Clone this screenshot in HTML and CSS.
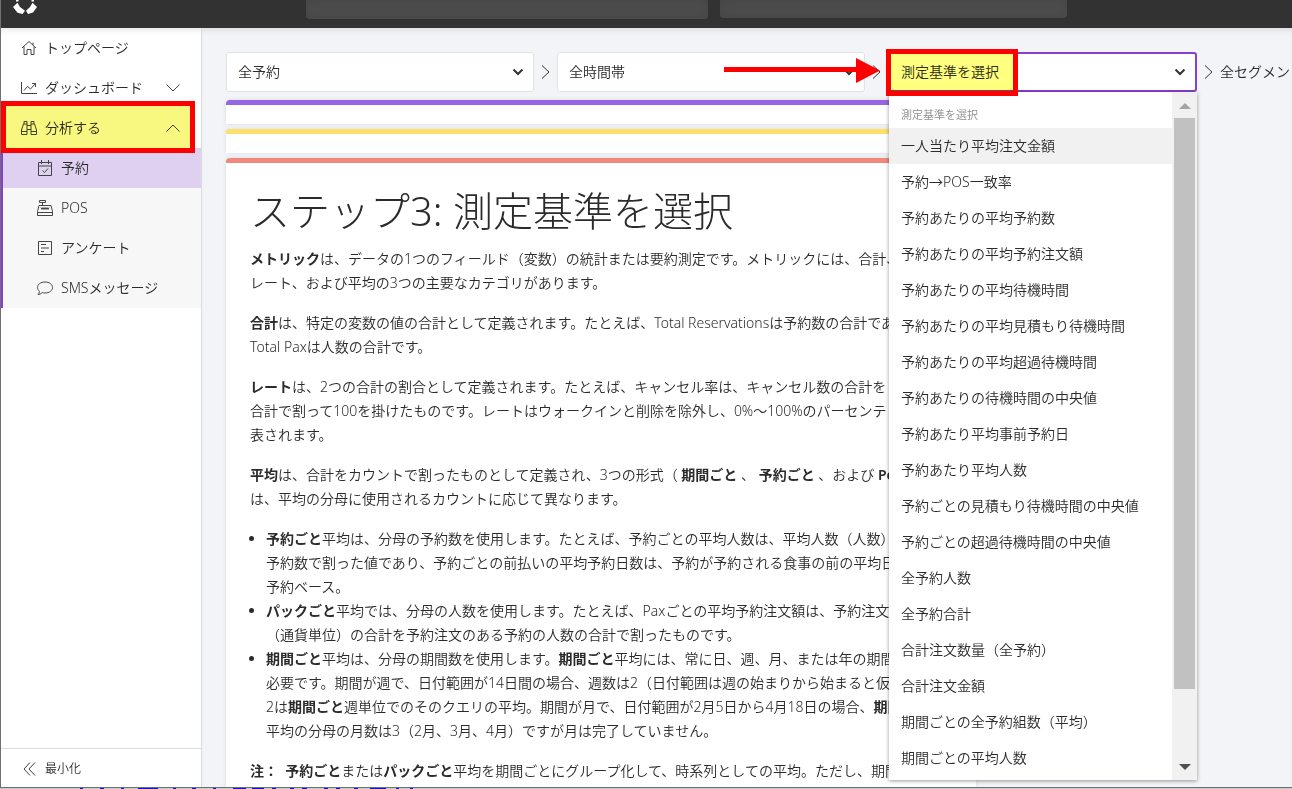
FILE: index.html
```html
<!DOCTYPE html>
<html lang="ja">
<head>
    <meta charset="UTF-8">
    <meta name="viewport" content="width=device-width, initial-scale=1.0">
    <title>測定基準を選択</title>
    <link rel="stylesheet" href="styles.css">
</head>
<body>
<div class="app">
    <header class="topbar">
        <svg class="logo" viewBox="0 0 26 28" width="26" height="28" fill="#fff">
            <path d="M1 7L5.500 2.800L8 7L13 10.800L10.500 14L5.500 12.800ZM25 7L20.500 2.800L18 7L14 10.800L16 14L21 12.500ZM4 0H6.500V1.500H4ZM19.500 0H22V1.500H19.500Z"/>
        </svg>
        <div class="topbar-box topbar-box-wide"></div>
        <div class="topbar-box"></div>
    </header>

    <div class="body">
        <nav class="sidebar">
            <a class="nav-item" href="#">
                <svg class="icon" viewBox="0 0 16 16"><path d="M1 8L8 1.500L15 8M3 6.500V14.500H6V9.500H10V14.500H13V6.500M12 5V2.500"/></svg>
                <span>トップページ</span>
            </a>
            <a class="nav-item" href="#">
                <svg class="icon" viewBox="0 0 16 16"><path d="M.5 2V13.500H16M3 10.500L6.500 6.500L9.500 9L14.500 3.500M11 3.500H14.500V7"/></svg>
                <span>ダッシュボード</span>
                <svg class="caret" viewBox="0 0 14 8"><path d="M.5 .5L7 7L13.500 .5"/></svg>
            </a>
            <a class="nav-item nav-open" href="#">
                <svg class="icon" viewBox="0 0 16 16"><path d="M2.500 4L.5 10V14.500H6V4ZM13.500 4L15.500 10V14.500H10V4ZM3 4V1.500H6V4M13 4V1.500H10V4M6 5.500H10M6 9.500H10M.5 11.500H6M10 11.500H15.500"/></svg>
                <span>分析する</span>
                <svg class="caret" viewBox="0 0 14 8"><path d="M.5 7.500L7 1L13.500 7.500"/></svg>
                <i class="mark mark-nav"></i>
            </a>
            <div class="subnav">
                <a class="nav-item selected" href="#">
                    <svg class="icon" viewBox="0 0 16 16"><path d="M1.500 2.500H14.500V15.500H1.500ZM1.500 6H14.500M4.500 0V4M11.500 0V4M5.500 10.500L7.500 12.500L11 8.500"/></svg>
                    <span>予約</span>
                </a>
                <a class="nav-item" href="#">
                    <svg class="icon" viewBox="0 0 16 16"><path d="M2.500 .5H8.500V2.500H2.500ZM5.500 2.500V5.500M2 5.500H14L15.500 11.500V15.500H.5V11.500ZM.5 12.500H15.500M4 7.500L5 9.500L6 7.500L7 9.500L8 7.500L9 9.500L10 7.500L11 9.500L12 7.500"/></svg>
                    <span>POS</span>
                </a>
                <a class="nav-item" href="#">
                    <svg class="icon" viewBox="0 0 16 16"><path d="M1.500 1.500H14.500V14.500H1.500ZM4 4.500H9M4 8H12M4 11.500H7"/></svg>
                    <span>アンケート</span>
                </a>
                <a class="nav-item" href="#">
                    <svg class="icon" viewBox="0 0 16 16"><path d="M8 2C12.500 2 15.500 4.500 15.500 7.500S12.500 13 8 13C7 13 6 12.800 5.200 12.500C4 13.800 2.500 14.500 1 14.500C2 13.500 2.400 12.500 2.500 11.300C1.200 10.300 .5 9 .5 7.500C.5 4.500 3.500 2 8 2Z"/></svg>
                    <span>SMSメッセージ</span>
                </a>
            </div>
            <button type="button" class="minimize">
                <svg class="icon" viewBox="0 0 16 16"><path d="M9 1.500L3 8L9 14.500M14 1.500L8 8L14 14.500"/></svg>
                <span>最小化</span>
            </button>
        </nav>

        <main class="content">
            <div class="filters">
                <button type="button" class="picker">
                    <span>全予約</span>
                    <svg class="chevron" viewBox="0 0 12 8"><path d="M1.500 1.500L6 6L10.500 1.500"/></svg>
                </button>
                <svg class="sep" viewBox="0 0 9 14"><path d="M1 .5L8 7L1 13.500"/></svg>
                <button type="button" class="picker">
                    <span>全時間帯</span>
                    <svg class="chevron" viewBox="0 0 12 8"><path d="M1.500 1.500L6 6L10.500 1.500"/></svg>
                </button>
                <svg class="sep" viewBox="0 0 9 14"><path d="M1 .5L8 7L1 13.500"/></svg>
                <div class="metric">
                    <button type="button" class="picker picker-active">
                        <span>測定基準を選択</span>
                        <svg class="chevron" viewBox="0 0 12 8"><path d="M1.500 1.500L6 6L10.500 1.500"/></svg>
                    </button>
                    <div class="menu">
                        <ul class="options">
                            <li class="options-title">測定基準を選択</li>
                            <li class="hover">一人当たり平均注文金額</li>
                            <li>予約→POS一致率</li>
                            <li>予約あたりの平均予約数</li>
                            <li>予約あたりの平均予約注文額</li>
                            <li>予約あたりの平均待機時間</li>
                            <li>予約あたりの平均見積もり待機時間</li>
                            <li>予約あたりの平均超過待機時間</li>
                            <li>予約あたりの待機時間の中央値</li>
                            <li>予約あたり平均事前予約日</li>
                            <li>予約あたり平均人数</li>
                            <li>予約ごとの見積もり待機時間の中央値</li>
                            <li>予約ごとの超過待機時間の中央値</li>
                            <li>全予約人数</li>
                            <li>全予約合計</li>
                            <li>合計注文数量（全予約）</li>
                            <li>合計注文金額</li>
                            <li>期間ごとの全予約組数（平均）</li>
                            <li>期間ごとの平均人数</li>
                        </ul>
                        <div class="scrollbar">
                            <svg viewBox="0 0 12 6"><path d="M0 6L6 0L12 6Z" fill="#a3a3a3"/></svg>
                            <div class="thumb"></div>
                            <svg viewBox="0 0 12 6"><path d="M0 0L6 6L12 0Z" fill="#505050"/></svg>
                        </div>
                    </div>
                    <i class="mark mark-metric"></i>
                    <svg class="arrow" viewBox="0 0 156 26"><path d="M0 9H132V0L156 12.500L132 25V14H0Z" fill="#f00"/></svg>
                </div>
                <svg class="sep" viewBox="0 0 9 14"><path d="M1 .5L8 7L1 13.500"/></svg>
                <span>全セグメン</span>
            </div>

            <section class="step step-purple"></section>
            <section class="step step-yellow"></section>
            <section class="step step-red">
                <h1>ステップ3: 測定基準を選択</h1>
                <p><b>メトリック</b>は、データの1つのフィールド（変数）の統計または要約測定です。メトリックには、合計、<br>レート、および平均の3つの主要なカテゴリがあります。</p>
                <p><b>合計</b>は、特定の変数の値の合計として定義されます。たとえば、Total Reservationsは予約数の合計であり、<br>Total Paxは人数の合計です。</p>
                <p><b>レート</b>は、2つの合計の割合として定義されます。たとえば、キャンセル率は、キャンセル数の合計を<br>合計で割って100を掛けたものです。レートはウォークインと削除を除外し、0%〜100%のパーセンテ<br>表されます。</p>
                <p><b>平均</b>は、合計をカウントで割ったものとして定義され、3つの形式（ <b>期間ごと</b> 、 <b>予約ごと</b> 、および <b>Per</b><br>は、平均の分母に使用されるカウントに応じて異なります。</p>
                <ul>
                    <li><b>予約ごと</b>平均は、分母の予約数を使用します。たとえば、予約ごとの平均人数は、平均人数（人数）<br>予約数で割った値であり、予約ごとの前払いの平均予約日数は、予約が予約される食事の前の平均日<br>予約ベース。</li>
                    <li><b>パックごと</b>平均では、分母の人数を使用します。たとえば、Paxごとの平均予約注文額は、予約注文<br>（通貨単位）の合計を予約注文のある予約の人数の合計で割ったものです。</li>
                    <li><b>期間ごと</b>平均は、分母の期間数を使用します。<b>期間ごと</b>平均には、常に日、週、月、または年の期間<br>必要です。期間が週で、日付範囲が14日間の場合、週数は2（日付範囲は週の始まりから始まると仮<br>2は<b>期間ごと</b>週単位でのそのクエリの平均。期間が月で、日付範囲が2月5日から4月18日の場合、<b>期間</b><br>平均の分母の月数は3（2月、3月、4月）ですが月は完了していません。</li>
                </ul>
                <p><b>注：&nbsp; 予約ごと</b>または<b>パックごと</b>平均を期間ごとにグループ化して、時系列としての平均。ただし、期間</p>
            </section>
        </main>
    </div>
</div>
<svg class="underlay" viewBox="0 0 420 1"><path d="M80 .5H83M100 .5H104M121 .5H124M138 .5H158M173 .5H176M192 .5H196M213 .5H216M233 .5H246M252 .5H264M272 .5H276M290 .5H294M302 .5H307M324 .5H328M336 .5H340M354 .5H358M370 .5H386M396 .5H399M410 .5H413"/></svg>
</body>
</html>
```
FILE: styles.css
```css
* {
    box-sizing: border-box;
}
body {
    display: flex;
    flex-direction: column;
    margin: 0;
    height: 100vh;
    overflow: hidden;
    background: #c8cacd;
    color: #2b2b2b;
    font-family: "Noto Sans", "Noto Sans CJK JP", sans-serif;
    font-size: 14px;
    font-weight: 350;
    line-height: 24px;
}
button {
    font: inherit;
    color: inherit;
    cursor: pointer;
}
ul {
    margin: 0;
    padding: 0;
}
svg {
    flex: none;
    fill: none;
    stroke-width: 1;
}
.app {
    display: flex;
    flex: 1;
    flex-direction: column;
    min-height: 0;
    border-left: 1px solid #707070;
    border-bottom: 1px solid #707070;
}
.underlay {
    width: 420px;
    height: 1px;
    stroke: #1a10c8;
}

/* top bar */
.topbar {
    display: flex;
    flex: none;
    gap: 12px;
    height: 28px;
    padding-left: 11px;
    background: #323232;
    align-items: flex-start;
}
.logo {
    margin-right: 256px;
    fill: #fff;
}
.topbar-box {
    width: 347px;
    height: 18px;
    border-radius: 0 0 4px 4px;
    background: #4c4c4c;
    box-shadow: inset 0 0 8px #454545;
}
.topbar-box-wide {
    width: 402px;
    height: 19px;
}
.body {
    display: flex;
    flex: 1;
    min-height: 0;
}

/* sidebar */
.sidebar {
    display: flex;
    flex-direction: column;
    flex: none;
    width: 201px;
    background: #fff;
    border-right: 1px solid #dcdde0;
    box-shadow: inset 0 6px 6px -4px #e6e6e6;
}
.nav-item {
    display: flex;
    align-items: center;
    gap: 8px;
    height: 40px;
    padding: 0 21px 0 20px;
    color: #2b2b2b;
    text-decoration: none;
}
.nav-open {
    position: relative;
}
.icon {
    width: 16px;
    height: 16px;
    stroke: #444;
}
.caret {
    width: 14px;
    height: 8px;
    margin-left: auto;
    stroke: #444;
}
.subnav {
    border-left: 2px solid #8540cf;
    background: #f7f7f7;
}
.subnav .nav-item {
    padding-left: 34px;
}
.subnav .selected {
    background: #dfd0f1;
}
.minimize {
    display: flex;
    align-items: center;
    gap: 8px;
    height: 39px;
    margin-top: auto;
    padding: 1px 20px 0;
    border: 0;
    border-top: 1px solid #dcdde0;
    background: #fff;
    font-size: 12px;
}

/* filters */
.content {
    flex: 1;
    min-width: 0;
    padding: 24px 0 0 24px;
    overflow: hidden;
    background: #f3f4f7;
    box-shadow: inset 0 6px 6px -4px #d8d9dc;
}
.filters {
    display: flex;
    align-items: center;
    gap: 7px;
    margin-bottom: 8px;
    white-space: nowrap;
}
.picker {
    display: flex;
    flex: none;
    align-items: center;
    justify-content: space-between;
    width: 308px;
    height: 40px;
    padding: 0 9px 0 11px;
    border: 1px solid #e1e2e5;
    border-radius: 3px;
    background: #fff;
}
.chevron {
    width: 12px;
    height: 8px;
    stroke: #333;
    stroke-width: 2;
}
.sep {
    width: 9px;
    height: 14px;
    stroke: #333;
}
.metric {
    position: relative;
}
.picker-active {
    width: 309px;
    border: 2px solid #8540cf;
    padding-left: 11px;
}
.menu {
    position: absolute;
    top: 40px;
    left: 1px;
    display: flex;
    width: 308px;
    background: #fff;
    box-shadow: 0 1px 4px rgba(0, 0, 0, 0.4);
}
.options {
    flex: 1;
    padding: 10px 0 4px;
    list-style: none;
}
.options li {
    height: 36px;
    padding: 0 12px;
    line-height: 36px;
}
.options .options-title {
    height: 26px;
    color: #8c8c8c;
    font-size: 11px;
    line-height: 26px;
}
.options .hover {
    background: #f1f1f1;
}
.scrollbar {
    display: flex;
    flex-direction: column;
    align-items: center;
    width: 25px;
    padding: 11px 0 10px;
    background: #f1f1f1;
}
.scrollbar svg {
    width: 12px;
    height: 6px;
}
.thumb {
    width: 21px;
    height: 571px;
    margin: 9px 0 auto;
    background: #c1c1c1;
}

/* red callouts */
.mark {
    position: absolute;
    border: 5px solid #f00;
}
.mark::before {
    content: "";
    position: absolute;
    inset: 0;
    background: #ffff80;
    mix-blend-mode: multiply;
}
.mark-nav {
    inset: -7px 6px -5px 0;
}
.mark-nav::before {
    background: #f8f880;
}
.mark-metric {
    inset: -3px 179px -4px -2px;
}
.arrow {
    position: absolute;
    top: 6px;
    right: 100%;
    width: 156px;
    height: 26px;
    margin-right: 8px;
}

/* steps */
.step {
    width: 750px;
    height: 24px;
    margin-bottom: 5px;
    background: #fff;
    border-top: 5px solid;
    border-radius: 4px 4px 0 0;
    box-shadow: 0 0 4px rgba(0, 0, 0, 0.1);
}
.step-purple {
    border-color: #9666e4;
}
.step-yellow {
    border-color: #fce06a;
}
.step-red {
    height: auto;
    padding: 22px 24px 24px;
    border-color: #f1887c;
    white-space: nowrap;
    overflow: hidden;
}
h1 {
    margin: 0 0 10px;
    font-size: 40px;
    font-weight: 300;
    line-height: 52px;
}
p {
    margin: 0 0 16px;
}
b {
    font-weight: 600;
}
.step ul {
    margin-bottom: 16px;
    padding-left: 16px;
}
```
